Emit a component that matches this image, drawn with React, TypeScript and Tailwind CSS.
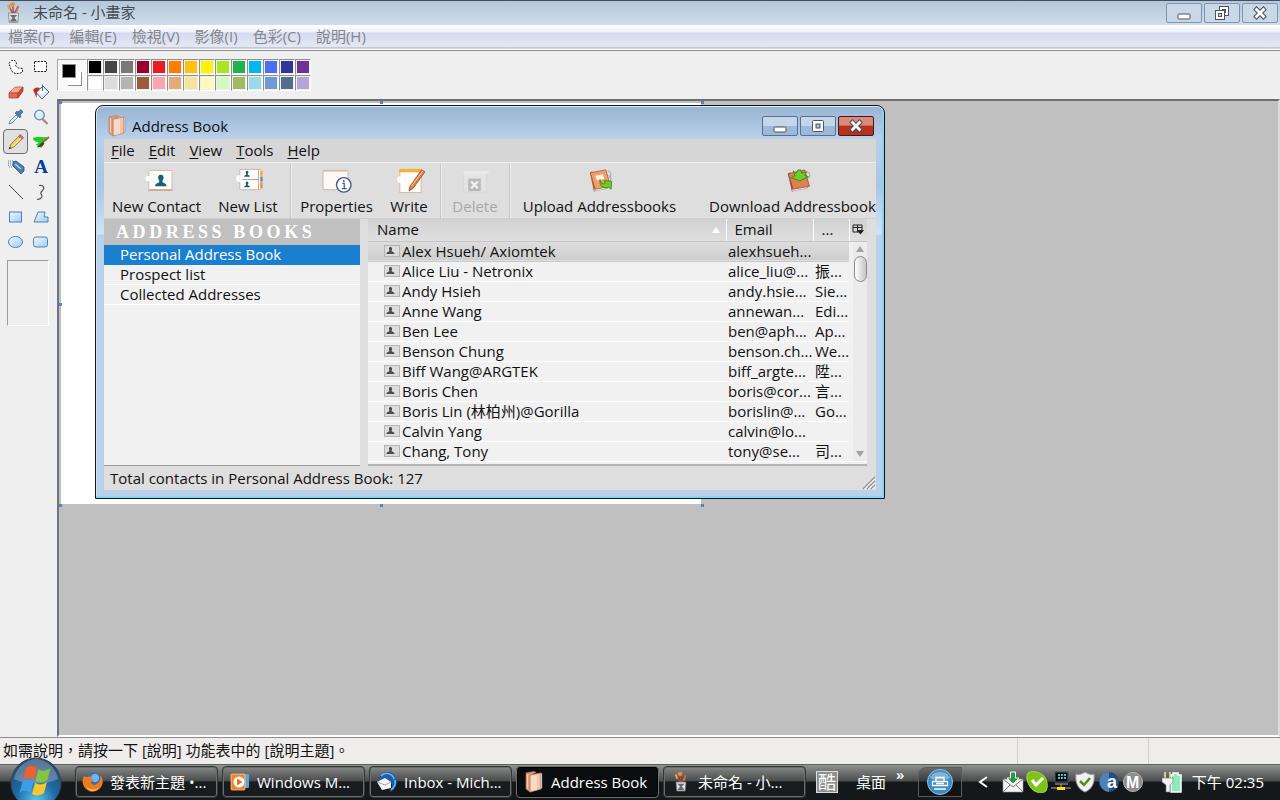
import type { ReactNode } from "react";

const paintMenus = ["檔案(F)", "編輯(E)", "檢視(V)", "影像(I)", "色彩(C)", "說明(H)"];

// two rows of 14 swatches
const palette = [
  "#000000", "#464646", "#787878", "#990030", "#ed1c24", "#ff7e00", "#ffc20e", "#fff200", "#a8e61d", "#22b14c", "#00b7ef", "#4d6df3", "#2f3699", "#6f3198",
  "#ffffff", "#dcdcdc", "#b4b4b4", "#9c5a3c", "#ffa3b1", "#e5aa7a", "#f5e49c", "#fff9bd", "#d3f9bc", "#9dbb61", "#99d9ea", "#709ad1", "#546d8e", "#b5a5d5",
];

const bookMenus = ["File", "Edit", "View", "Tools", "Help"];

const books = ["Personal Address Book", "Prospect list", "Collected Addresses"];

const contacts = [
  { name: "Alex Hsueh/ Axiomtek", email: "alexhsueh...", org: "" },
  { name: "Alice Liu - Netronix", email: "alice_liu@...", org: "振..." },
  { name: "Andy Hsieh", email: "andy.hsie...", org: "Sie..." },
  { name: "Anne Wang", email: "annewan...", org: "Edi..." },
  { name: "Ben Lee", email: "ben@aph...", org: "Ap..." },
  { name: "Benson Chung", email: "benson.ch...", org: "We..." },
  { name: "Biff Wang@ARGTEK", email: "biff_argte...", org: "陞..." },
  { name: "Boris Chen", email: "boris@cor...", org: "言..." },
  { name: "Boris Lin (林柏州)@Gorilla", email: "borislin@...", org: "Go..." },
  { name: "Calvin Yang", email: "calvin@lo...", org: "" },
  { name: "Chang, Tony", email: "tony@se...", org: "司..." },
];

/* ================= Icons ================= */

const BookIcon = ({ className }: { className: string }) => (
  <svg viewBox="0 0 18 22" className={className}>
    <path d="M1 2 9 .5l2 1L5 4v17L1 18z" fill="#dd9c7c" stroke="#b97a5c" strokeWidth=".7" />
    <path d="M2.500 3.500v14" stroke="#f6cdb6" />
    <path d="M5 4 16 2v16L5 21z" fill="#f4c4a5" stroke="#c08a6c" strokeWidth=".8" />
    <path d="M6 5 12 4v15l-6 1z" fill="#fbe0cf" opacity=".8" />
    <path d="M16 2v16l1-1V3z" fill="#fff" stroke="#7d7a80" strokeWidth=".5" />
  </svg>
);

const PaintIcon = ({ className }: { className: string }) => (
  <svg viewBox="0 0 16 22" className={className}>
    <path d="M7.500 13 3 3M8 13l5-9M8 12 7 1" stroke="#b5442e" strokeWidth="1.500" fill="none" />
    <path d="m1 3 2-1 2 5-2 1z" fill="#e0a060" />
    <path d="m12 3 2 1-2 6-2-1z" fill="#c96a52" />
    <circle cx="7" cy="2" r="2.500" fill="#f08a38" />
    <path d="M2.500 11h11l-1 10h-9z" fill="#dfe3e6" stroke="#737b83" strokeWidth=".8" />
    <path d="M4 13h8l-3 3 3 4H4l3-4z" fill="#656c74" />
  </svg>
);

const MinGlyph = () => (
  <svg viewBox="0 0 14 14" className="size-3.5">
    <rect x="1" y="8" width="12" height="5" rx="1" fill="#fff" stroke="#4a5463" />
  </svg>
);

const MaxGlyph = () => (
  <svg viewBox="0 0 14 14" className="size-3.5">
    <rect x="1.500" y="1.500" width="11" height="11" rx="1" fill="#fff" stroke="#4a5463" />
    <rect x="5" y="5" width="4" height="4" fill="#aac0da" stroke="#4a5463" />
  </svg>
);

const RestoreGlyph = () => (
  <svg viewBox="0 0 16 16" className="size-4">
    <rect x="5.500" y="1.500" width="9" height="9" fill="#fff" stroke="#4a5463" />
    <rect x="8.500" y="4.500" width="3" height="3" fill="#c5d3e2" stroke="#4a5463" />
    <rect x="1.500" y="5.500" width="9" height="9" fill="#fff" stroke="#4a5463" />
    <rect x="4.500" y="8.500" width="3" height="3" fill="#c5d3e2" stroke="#4a5463" />
  </svg>
);

const CloseGlyph = () => (
  <svg viewBox="0 0 14 14" className="size-3.5">
    <path d="m3.500 3.500 7 7M10.500 3.500l-7 7" stroke="#4a4d5a" strokeWidth="4.800" strokeLinecap="square" />
    <path d="m3.500 3.500 7 7M10.500 3.500l-7 7" stroke="#fff" strokeWidth="2.800" strokeLinecap="square" />
  </svg>
);

const tools: { label: string; icon: ReactNode }[] = [
  {
    label: "Free-form select",
    icon: <path d="M1 4.500 3.500 1.500h3.500l1.500 2.500-1 3 3 2 4 .5v3.500l-3 1.500H7L4 12.500 2.500 9z" fill="#fff" stroke="#111" strokeDasharray="2 1.200" />,
  },
  { label: "Select", icon: <rect x="1.500" y="2.500" width="12" height="10" fill="#fff" stroke="#111" strokeDasharray="2 1.200" /> },
  {
    label: "Eraser",
    icon: (
      <>
        <path d="m1 9 6-6h8l-5 6z" fill="#f5a896" stroke="#c65a48" strokeWidth=".8" />
        <path d="M1 9h9v5H1z" fill="#e06a56" stroke="#b84a38" strokeWidth=".8" />
        <path d="m10 9 5-6v4l-5 7z" fill="#c94a38" stroke="#a83c2c" strokeWidth=".8" />
      </>
    ),
  },
  {
    label: "Fill",
    icon: (
      <>
        <path d="M3 8.500 10 2l6 6-7 7z" fill="#d7e7f5" stroke="#476a90" />
        <path d="m5.500 8.500 4.500-4 3 3-4.500 3.500z" fill="#fff" />
        <path d="M9.500 7V.5" stroke="#476a90" />
        <path d="M0 6c2-3 5-3 7-2L4 8l-.5 6L1.500 9z" fill="#c52b24" />
      </>
    ),
  },
  {
    label: "Pick color",
    icon: (
      <>
        <path d="m1 15 1-3 6-6 2 2-6 6z" fill="#d9ecf9" stroke="#56789b" strokeWidth=".8" />
        <path d="m7 4 5 5 1-2-1-1 3-3-2-2.500-3 2.500-1-1z" fill="#4f7cab" stroke="#315a86" strokeWidth=".6" />
      </>
    ),
  },
  {
    label: "Magnifier",
    icon: (
      <>
        <path d="m9.500 10 5 5" stroke="#b88b60" strokeWidth="2.400" />
        <circle cx="6.500" cy="6" r="4.800" fill="#d9edfb" stroke="#6589ad" strokeWidth="1.300" />
        <path d="M4 5q1-2 3-2" stroke="#fff" fill="none" />
      </>
    ),
  },
  {
    label: "Pencil",
    icon: (
      <>
        <path d="m1 15 2-5 9-9 3 3-9 9z" fill="#f3cf63" stroke="#8f6c25" strokeWidth=".8" />
        <path d="m10.500 2.500 1.500-2 3.500 3-1.500 2z" fill="#d67579" stroke="#8c4648" strokeWidth=".6" />
        <path d="m5 12 8-8" stroke="#fff0a8" />
        <path d="m1 15 .8-2 1.400 1z" fill="#111" />
      </>
    ),
  },
  {
    label: "Brush",
    icon: (
      <>
        <path d="M0 4c4-2 9 0 14-1 1 2-1 4-4 5 2 1 0 4-2 6-1-2-5-2-5-4 2 0 3-1 2-2-2 0-5-1-5-4z" fill="#1bd11f" />
        <path d="m16 3-7 6" stroke="#a8642e" strokeWidth="1.800" />
        <path d="m9.500 8-6 5.500 5.500-1 2.500-3z" fill="#5a3720" />
      </>
    ),
  },
  {
    label: "Airbrush",
    icon: (
      <>
        <path d="M0 2h5M0 4h4M0 6h5M1 8h3" stroke="#4d7ca8" strokeDasharray="1 1" />
        <path d="m5 3 3-1 8 6v4l-3 3-8-8z" fill="#4c7dac" stroke="#28507a" strokeWidth=".8" />
        <path d="m7 5 6 5" stroke="#b7d7ef" strokeWidth="1.500" />
      </>
    ),
  },
  {
    label: "Text",
    icon: (
      <text x="8" y="14" textAnchor="middle" fontSize="19" fontWeight="bold" fontFamily="Liberation Serif, serif" fill="#0b37a0">A</text>
    ),
  },
  { label: "Line", icon: <path d="m1 1 14 14" stroke="#444" /> },
  { label: "Curve", icon: <path d="M6 1.500c5-1 6 3 3 5.500s0 3 0 5-3 4-5 3" fill="none" stroke="#555" strokeWidth="1.200" /> },
  { label: "Rectangle", icon: <rect x="1.500" y="3" width="12" height="10" fill="url(#shape)" stroke="#4f81b0" /> },
  { label: "Polygon", icon: <path d="m1 13 4-10h7l-1 5h4v5z" fill="url(#shape)" stroke="#4f81b0" /> },
  { label: "Ellipse", icon: <ellipse cx="7.500" cy="8" rx="7" ry="5.500" fill="url(#shape)" stroke="#4f81b0" /> },
  { label: "Rounded rectangle", icon: <rect x=".5" y="3" width="14" height="10" rx="2.500" fill="url(#shape)" stroke="#4f81b0" /> },
];

const Person = ({ x, y, s = 1 }: { x: number; y: number; s?: number }) => (
  <path
    transform={`translate(${x} ${y}) scale(${s})`}
    d="M6 0c2.500 0 3.200 2 2.700 4C8.300 5.500 7.600 6 7.600 7.500c1 1.500 4.400 1 4.400 4.500H0c0-3.500 3.400-3 4.400-4.500 0-1.500-.7-2-1.100-3.500C2.800 2 3.500 0 6 0z"
    fill="#12647c"
  />
);

const bookButtons: { label: string; width: string; disabled?: boolean; divided?: boolean; icon: ReactNode }[] = [
  {
    label: "New Contact",
    width: "w-[105px]",
    icon: (
      <>
        <rect x="8.500" y="3.500" width="24" height="20" rx="1" fill="#fffdfb" stroke="#d5b9a8" />
        <path d="M8 24h25" stroke="#c08a6c" />
        <Person x={15} y={8} />
        <circle cx="8" cy="12" r="3" fill="#fff" opacity=".9" />
      </>
    ),
  },
  {
    label: "New List",
    width: "w-[78px]",
    icon: (
      <>
        <rect x="8.500" y="2.500" width="22" height="21" rx="1" fill="#fffdfb" stroke="#d0b3a0" />
        <path d="M28 3v20M8 13h20" stroke="#c9987e" />
        <path d="M31 4v5" stroke="#e8b33c" strokeWidth="2.500" />
        <path d="M31 10v5" stroke="#5b92b5" strokeWidth="2.500" />
        <path d="M31 16v6" stroke="#dd9354" strokeWidth="2.500" />
        <Person x={13} y={4} s={0.5} />
        <Person x={13} y={15} s={0.5} />
        <circle cx="8" cy="12" r="3.500" fill="#fff" opacity=".9" />
      </>
    ),
  },
  {
    label: "Properties",
    width: "ml-[3px] w-[92px]",
    divided: true,
    icon: (
      <>
        <rect x="2.500" y="3.500" width="26" height="20" rx="1" fill="#fbf8f5" stroke="#cdb4a4" />
        <path d="M3 4.500h25" stroke="#f0c49a" />
        <circle cx="24" cy="18.500" r="7.500" fill="#fff" stroke="#40598c" strokeWidth="1.400" />
        <path d="M22.500 17H24.500v5.500M22 22.500h5" stroke="#40598c" strokeWidth="1.300" fill="none" />
        <circle cx="24" cy="14.500" r="1" fill="#40598c" />
      </>
    ),
  },
  {
    label: "Write",
    width: "w-[58px] pr-1",
    icon: (
      <>
        <rect x="7.500" y="2.500" width="22" height="24" fill="#fffdfa" stroke="#d8b99f" />
        <path d="M7 2h23v3.500H7z" fill="#f5b33d" />
        <path d="m17 25 1-5L30 3l3.500 2-12 17z" fill="#db8247" stroke="#8c492b" strokeWidth=".8" />
        <path d="m19.500 20 12-16" stroke="#ffcf9e" />
        <circle cx="8" cy="13" r="3.500" fill="#fff" opacity=".9" />
      </>
    ),
  },
  {
    label: "Delete",
    width: "w-[69px]",
    disabled: true,
    divided: true,
    icon: (
      <>
        <rect x="5" y="4" width="24" height="22" fill="#e3e3e3" stroke="#d8d8d8" />
        <path d="M5 4h26v3H5z" fill="#ebebeb" />
        <rect x="10" y="12" width="13" height="13" fill="#b9b9b9" />
        <path d="m13 15 7 7M20 15l-7 7" stroke="#f2f2f2" strokeWidth="2.400" />
      </>
    ),
  },
  {
    label: "Upload Addressbooks",
    width: "w-[180px]",
    divided: true,
    icon: (
      <>
        <path d="M25 4c4 0 4 5 2 7M26 9c3 1 3 4 1 6" stroke="#9a9a9a" fill="none" />
        <path d="m7 6 2-1 5 18-3 2z" fill="#b95b38" stroke="#8d4328" strokeWidth=".6" />
        <path d="m11 25 14-3v-2l-14 3z" fill="#fff" stroke="#9a8577" strokeWidth=".6" />
        <path d="m7 6 16-3 5 17-16 3z" fill="#efa068" stroke="#ad5534" strokeWidth=".8" />
        <path d="m12 9 8-1.500 1.500 5-7.500 1.500z" fill="#fff3e8" />
        <path d="M17 13c1 4 3 5 5.500 4l-1-3L29 15l-.5 8-2.500-2c-5 2-10-1-9-8z" fill="#6ccc28" stroke="#317d10" strokeWidth=".8" />
      </>
    ),
  },
  {
    label: "Download Addressbooks",
    width: "w-[214px]",
    icon: (
      <>
        <path d="M28 5c4 0 4 5 2 7" stroke="#9a9a9a" fill="none" />
        <path d="m9 7 2-1 5 17-3 2z" fill="#a9472d" stroke="#7d3420" strokeWidth=".6" />
        <path d="m13 25 16-3v-2l-16 3z" fill="#fff" stroke="#9a8577" strokeWidth=".6" />
        <path d="m9 7 17-4 5 17-17 3z" fill="#df8052" stroke="#9d4a2e" strokeWidth=".8" />
        <path d="m14 4 3 2.500L19 3h3l1 3.500L28 5l-2 4 4 1-9 4.500L12 11l4-2z" fill="#6ccc28" stroke="#317d10" strokeWidth=".8" />
      </>
    ),
  },
];

const FirefoxIcon = () => (
  <svg viewBox="0 0 22 22" className="size-[22px] shrink-0">
    <circle cx="11" cy="10.500" r="9" fill="#2f6fc4" />
    <circle cx="13" cy="7" r="4" fill="#72b5ea" />
    <path d="M2 5c1 1 2 1 4 1 2-1 4 0 4 2l2 1-3 2c0 3 4 4 7 1 2-2 3-5 2-8 3 3 4 8 1 12-4 6-12 6-16 1C0 13 0 9 2 5z" fill="#ee7a1b" />
    <path d="M4 15c3 4 9 5 13 1-2 5-10 6-13-1z" fill="#fdc23e" />
  </svg>
);

const PlayerIcon = () => (
  <svg viewBox="0 0 22 22" className="size-[22px] shrink-0">
    <rect x="6" y="3" width="14" height="14" rx="1" fill="#5aa6d8" />
    <rect x="2" y="3" width="14" height="16" rx="1" fill="#f0832c" stroke="#fbd6a8" strokeWidth=".7" />
    <circle cx="10" cy="11" r="5.500" fill="#fff" />
    <path d="m8 7.500 5.500 3.500L8 14.500z" fill="#e7701b" />
  </svg>
);

const MailIcon = () => (
  <svg viewBox="0 0 22 22" className="size-[22px] shrink-0">
    <path d="M3 7C6 0 15-1 19 5c4 6 1 14-6 16 3-3 4-7 2-9L4 11z" fill="#1d5da8" />
    <path d="M5 5c5-5 12-2 13 3M19 9c1 4-1 8-4 10" stroke="#5fb0ea" strokeWidth="1.800" fill="none" />
    <path d="m1 11 8-4 6 4v6l-9 2z" fill="#f8f8fa" />
    <path d="m1 11 8 3 6-3" stroke="#9ba6b8" fill="none" />
  </svg>
);

const tasks: { label: string; icon: ReactNode; active?: boolean }[] = [
  { label: "發表新主題 •...", icon: <FirefoxIcon /> },
  { label: "Windows M...", icon: <PlayerIcon /> },
  { label: "Inbox - Mich...", icon: <MailIcon /> },
  { label: "Address Book", icon: <BookIcon className="h-[22px] w-[22px] shrink-0" />, active: true },
  { label: "未命名 - 小...", icon: <PaintIcon className="h-[20px] w-[22px] shrink-0" /> },
];

const trayIcons: { label: string; icon: ReactNode }[] = [
  {
    label: "New mail",
    icon: (
      <>
        <path d="M1 8h20v13H1z" fill="#f3f3f3" stroke="#999" strokeWidth=".6" />
        <path d="m1 8 10 8 10-8M1 21l7-7M21 21l-7-7" fill="none" stroke="#777" />
        <path d="M8.500 1h5v6H17l-6 6-6-6h3.500z" fill="#279b3c" stroke="#fff" />
      </>
    ),
  },
  {
    label: "Skype",
    icon: (
      <>
        <path d="M2 2c4-3 12-1 16 3 4 5 4 11 2 15-4 3-9 2-13-1C2 15-1 6 2 2z" fill="#7cc416" stroke="#b8e35c" strokeWidth=".8" />
        <path d="m6 9 4 5 7-7" stroke="#fff" strokeWidth="3" fill="none" />
      </>
    ),
  },
  {
    label: "Network",
    icon: (
      <>
        <rect x="5" y="1" width="13" height="10" fill="#050505" stroke="#4e5a60" />
        <path d="M8 4h8M8 7h8" stroke="#35c9d8" strokeWidth="2" strokeDasharray="2 1" />
        <path d="M5 13h13M11 13v3M1 17h20" stroke="#aaa" />
        <rect x="7" y="16" width="8" height="3" fill="#ffe600" />
      </>
    ),
  },
  {
    label: "Security",
    icon: (
      <>
        <path d="M2 3c3 1 6 0 9-2 3 2 6 3 9 2 1 9-2 15-9 18C4 18 1 12 2 3z" fill="#f1f1f1" stroke="#999" />
        <path d="m6 10 4 4 6-7" stroke="#5c8a14" strokeWidth="2.500" fill="none" />
      </>
    ),
  },
  {
    label: "Avira",
    icon: (
      <>
        <circle cx="11" cy="11" r="10" fill="#214f8c" />
        <path d="M2 7a10 10 0 0 1 9-6v20C5 20 0 14 2 7z" fill="#6da3d4" opacity=".6" />
        <text x="9" y="17" fontSize="18" fontWeight="bold" fontFamily="Liberation Sans, sans-serif" fill="#fff">a</text>
      </>
    ),
  },
  {
    label: "Messenger",
    icon: (
      <>
        <circle cx="11" cy="11" r="9.500" fill="#8d8d8d" stroke="#b5b5b5" />
        <text x="4" y="16.500" fontSize="16" fontWeight="bold" fontFamily="Liberation Sans, sans-serif" fill="#fff">M</text>
      </>
    ),
  },
];

/* ================= Address book window ================= */

const AddressBook = () => (
  <section
    aria-label="Address Book"
    className="absolute top-1 left-9 w-[790px] rounded-t-lg border border-[#10151c] bg-[linear-gradient(#99b4d2_0px,#b9d0ea_33px,#a9c6e6_80px,#d3e3f4_128px,#b9d1ea_129px)] px-2 pb-2 shadow-[inset_0_1px_0_#dcecf8,inset_-2px_-2px_0_#86d6f0,inset_1px_0_0_#cfe2f3]"
  >
    <header className="flex h-[33px] items-center pt-1.5">
      <BookIcon className="mx-1 h-[22px] w-[18px]" />
      <h2 className="flex-1 pl-0.5">Address Book</h2>
      <div className="flex gap-0.5 pr-0.5">
        <button aria-label="Minimize" className="flex h-5 w-9 items-center justify-center rounded-xs border border-[#54719a] bg-linear-to-b from-[#c4d6e9] from-50% to-[#9db9d7] to-50%"><MinGlyph /></button>
        <button aria-label="Maximize" className="flex h-5 w-9 items-center justify-center rounded-xs border border-[#54719a] bg-linear-to-b from-[#c4d6e9] from-50% to-[#9db9d7] to-50%"><MaxGlyph /></button>
        <button aria-label="Close" className="flex h-5 w-9 items-center justify-center rounded-xs border border-[#4c1517] bg-linear-to-b from-[#d98a7c] from-45% to-[#b8311d] to-50%"><CloseGlyph /></button>
      </div>
    </header>

    <div className="bg-[#dedede]">
      <nav className="flex h-6 items-center gap-3.5 border-b border-[#efefef] bg-[#d6d6d6] pb-0.5 pl-[7px]">
        {bookMenus.map((menu) => (
          <button key={menu}>
            <span className="underline underline-offset-2">{menu[0]}</span>
            {menu.slice(1)}
          </button>
        ))}
      </nav>

      <div className="flex h-14 overflow-hidden border-b border-[#cfcfcf]">
        {bookButtons.map(({ label, width, disabled, divided, icon }) => (
          <button
            key={label}
            disabled={disabled}
            className={`flex shrink-0 flex-col items-center pt-1 whitespace-nowrap disabled:text-[#a8a8a8] ${width} ${divided ? "border-l border-[#c8c8c8] shadow-[inset_1px_0_0_#ededed]" : ""}`}
          >
            <svg viewBox="0 0 34 28" className="h-7 w-[34px]">{icon}</svg>
            <span className="leading-6">{label}</span>
          </button>
        ))}
      </div>

      <div className="flex">
        <aside className="w-64 border-b border-[#9c9c9c] bg-[#f1f1f1]">
          <h3 className="h-[26px] bg-[#c0c0c0] pl-3 font-[Liberation_Serif,serif] text-lg leading-[26px] font-bold tracking-[0.2em] text-white">ADDRESS BOOKS</h3>
          <ul>
            {books.map((book, i) => (
              <li key={book}>
                <button className={`block h-5 w-full border-b pl-4 text-left leading-[19px] ${i === 0 ? "border-[#1b7fcf] bg-[#1b7fcf] text-white" : "border-white"}`}>{book}</button>
              </li>
            ))}
          </ul>
        </aside>

        <div className="mr-[9px] ml-2 flex-1 border-b-2 border-[#b5b5b5] bg-[#f1f1f1] pb-0.5">
          <table className="w-full table-fixed border-collapse">
            <colgroup>
              <col />
              <col className="w-[87px]" />
              <col className="w-9" />
              <col className="w-[18px]" />
            </colgroup>
            <thead className="bg-linear-to-b from-[#d2d2d2] to-[#dfdfdf]">
              <tr className="h-[22px]">
                <th className="border-b border-[#c6c6c6] p-0 font-normal">
                  <button className="flex w-full items-center justify-between pr-1.5 pl-[9px] leading-[21px]">
                    Name
                    <svg viewBox="0 0 8 6" className="h-1.5 w-2"><path d="m4 0 4 6H0z" fill="#fff" /></svg>
                  </button>
                </th>
                <th className="border-b border-l border-[#c6c6c6] border-l-white p-0 pl-2 text-left leading-[21px] font-normal">Email</th>
                <th className="border-b border-l border-[#c6c6c6] border-l-white p-0 pl-2 text-left leading-[21px] font-normal">...</th>
                <th className="border-b border-l border-[#c6c6c6] border-l-white p-0">
                  <button aria-label="Select columns" className="flex w-full justify-center">
                    <svg viewBox="0 0 12 11" className="h-[11px] w-3">
                      <path d="M1 1h9v7H1zM1 3.500h9M5.500 1v7" fill="none" stroke="#222" />
                      <path d="M5 6h7l-3.500 4.500z" fill="#222" />
                    </svg>
                  </button>
                </th>
              </tr>
            </thead>
            <tbody>
              {contacts.map(({ name, email, org }, i) => (
                <tr key={name} className={`h-5 border-b ${i === 0 ? "border-[#c9c9c9] bg-linear-to-b from-[#dedede] to-[#cecece]" : "border-white"}`}>
                  <td className="p-0 leading-[19px]">
                    <div className="flex items-center gap-0.5 pl-4">
                      <svg viewBox="0 0 16 12" className="h-3 w-4">
                        <rect x=".5" y=".5" width="15" height="11" fill="#dcdcdc" stroke="#b4b4b4" />
                        <path d="M6.500 2c1.500 0 1.800 1.200 1.500 2.500L7.500 6c.5.8 3 .6 3 3h-8c0-2.400 2.500-2.200 3-3L5 4.500C4.700 3.200 5 2 6.500 2z" fill="#4d4d4d" />
                      </svg>
                      {name}
                    </div>
                  </td>
                  <td className="p-0 pl-0.5 leading-[19px] whitespace-nowrap">{email}</td>
                  <td className="p-0 pl-0.5 leading-[19px] whitespace-nowrap">{org}</td>
                  {i === 0 && (
                    <td rowSpan={contacts.length} className="bg-[#f1f1f1] p-0 pl-1">
                      <div className="flex h-[219px] flex-col items-center bg-[#ebebeb] py-1">
                        <svg viewBox="0 0 8 6" className="h-1.5 w-2"><path d="m4 0 4 6H0z" fill="#a2a2a2" /></svg>
                        <div className="mt-1 h-[26px] w-[13px] rounded-full border border-[#8a8a8a] bg-linear-to-r from-white to-[#c4c4c4]" />
                        <svg viewBox="0 0 8 6" className="mt-auto h-1.5 w-2"><path d="m4 6 4-6H0z" fill="#a2a2a2" /></svg>
                      </div>
                    </td>
                  )}
                </tr>
              ))}
            </tbody>
          </table>
        </div>
      </div>

      <footer className="flex h-6 items-end justify-between pl-1.5">
        <span className="self-center">Total contacts in Personal Address Book: 127</span>
        <svg viewBox="0 0 14 14" className="size-3.5">
          <path d="M1 13 13 1M5 13l8-8M9 13l4-4" stroke="#8c8c8c" strokeWidth="1.200" />
          <path d="M2.500 13 13 2.500M6.500 13 13 6.500M10.500 13l2.500-2.500" stroke="#fff" />
        </svg>
      </footer>
    </div>
  </section>
);

/* ================= Paint ================= */

const Toolbox = () => (
  <aside className="w-[57px] pt-[3px]">
    <div className="grid grid-cols-2 pr-1 pl-[3px]">
      {tools.map(({ label, icon }) => (
        <button
          key={label}
          aria-label={label}
          className={`flex h-[25px] items-center justify-center rounded-sm border ${label === "Pencil" ? "border-[#6e6e6e] bg-[#e0e0e0]" : "border-transparent"}`}
        >
          <svg viewBox="0 0 16 16" className="size-4 overflow-visible">{icon}</svg>
        </button>
      ))}
    </div>
    <div className="mt-1.5 ml-[7px] h-[66px] w-[42px] border border-white border-t-[#9c9c9c] border-l-[#9c9c9c]" />
  </aside>
);

const Palette = () => (
  <div className="flex h-12 pt-2">
    <div className="relative h-8 w-[30px] border border-[#a5a5a5] border-r-white border-b-white bg-[#f8f8f8]">
      <span className="absolute top-3 left-2.5 size-3.5 border-r border-b border-[#8f8f8f] bg-white" />
      <span className="absolute top-1 left-1 size-3.5 border border-[#8f8f8f] bg-black ring-1 ring-white" />
    </div>
    <div className="grid h-8 w-56 grid-cols-14">
      {palette.map((color) => (
        <button key={color} aria-label={color} className="size-4 border border-white border-t-[#8e8e8e] border-l-[#8e8e8e] p-px">
          <span className="block size-full" style={{ backgroundColor: color }} />
        </button>
      ))}
    </div>
  </div>
);

const handle = "absolute size-[3px] bg-[#4d86c6]";

const Workspace = () => (
  <div className="relative flex-1 overflow-hidden border-2 border-white border-t-[#6f6c6c] border-l-[#6b7480] border-r-[#dcdcdc] bg-[#c0c0c0] p-0.5">
    <div className="h-[401px] w-[640px] bg-white" />
    <i className={`${handle} top-0 left-0`} />
    <i className={`${handle} top-0 left-[321px]`} />
    <i className={`${handle} top-0 left-[642px]`} />
    <i className={`${handle} top-[202px] left-0`} />
    <i className={`${handle} top-[403px] left-0`} />
    <i className={`${handle} top-[403px] left-[321px]`} />
    <i className={`${handle} top-[403px] left-[642px]`} />
    <AddressBook />
  </div>
);

/* ================= Taskbar ================= */

const StartOrb = () => (
  <button aria-label="Start" className="absolute -top-2 left-2.5">
    <svg viewBox="0 0 52 52" className="size-[52px]">
      <circle cx="26" cy="26" r="25" fill="url(#orb)" stroke="#33475a" />
      <path d="M4 22C7 7 20 2 26 2s19 5 22 20c-12 6-32 6-44 0z" fill="#fff" opacity=".25" />
      <path d="M16 11c4-3 8-3 11 0l-3 12c-4-3-7-3-11 0z" fill="#f0602a" />
      <path d="M28.500 12c4 3 8 2 12-1l-3 12c-4 3-9 3-12 1z" fill="#86c440" />
      <path d="M12.500 25c4-3 7-3 11 0l-3 11c-4-3-7-3-11 0z" fill="#3d9ee6" />
      <path d="M25 26c4 2 8 2 12-1l-3 11c-4 3-9 3-12 1z" fill="#fbc62c" />
    </svg>
  </button>
);

const Taskbar = () => (
  <footer className="relative flex h-9 items-center border-t border-[#5d615e] bg-linear-to-b from-[#919391] via-[#4a4d4c] via-45% to-[#15181a] to-50% pb-0.5 text-white">
    <StartOrb />
    <div className="flex gap-1 pl-[75px]">
      {tasks.map(({ label, icon, active }) => (
        <button
          key={label}
          className={`flex h-8 w-[143px] items-center gap-1.5 rounded-sm border px-1.5 whitespace-nowrap ${
            active
              ? "border-[#6f7271] bg-[#0b0c0d] shadow-[inset_0_0_0_1px_#000]"
              : "border-[#343837] bg-linear-to-b from-[#858886] via-[#4b4e4d] via-45% to-[#191c1e] to-50% shadow-[inset_0_0_0_1px_#6a6d6b]"
          }`}
        >
          {icon}
          {label}
        </button>
      ))}
    </div>
    <button className="ml-2.5 flex size-[22px] items-center justify-center border border-[#ddd] bg-[#8f8f8f] text-lg leading-5">酷</button>
    <button className="ml-[18px] whitespace-nowrap">桌面</button>
    <button aria-label="More" className="mb-4 ml-2.5 leading-4 font-semibold">»</button>
    <button aria-label="Language bar" className="ml-3.5 flex h-[30px] w-11 items-center justify-center rounded-tl-lg border border-[#5b5e5d] bg-black/20">
      <svg viewBox="0 0 26 26" className="size-[26px]">
        <circle cx="13" cy="13" r="12.500" fill="#3d8bc4" stroke="#8fc4e6" />
        <path d="M3 9c3-8 17-8 20 0-6 3-14 3-20 0z" fill="#fff" opacity=".35" />
        <path d="M9 12V8.500h8V12M5.500 12.500h15v4h-15zM9 14.500h8M7 20h12" fill="none" stroke="#fff" strokeWidth="1.300" />
      </svg>
    </button>
    <div className="ml-auto flex items-center gap-0.5 pr-4">
      <button aria-label="Show hidden icons" className="mr-3">
        <svg viewBox="0 0 10 12" className="h-3 w-2.5"><path d="M9 1 2 6l7 5" fill="none" stroke="#fff" strokeWidth="2" /></svg>
      </button>
      {trayIcons.map(({ label, icon }) => (
        <button key={label} aria-label={label}>
          <svg viewBox="0 0 22 22" className="size-[22px]">{icon}</svg>
        </button>
      ))}
      <button aria-label="Battery" className="ml-4">
        <svg viewBox="0 0 20 22" className="h-[22px] w-5">
          <path d="M9 4h2V2h5v2h3v17H9z" fill="#8eeabc" stroke="#fff" strokeWidth="1.500" />
          <path d="M3 1v6M8 1v6" stroke="#e5d391" strokeWidth="1.800" />
          <path d="M0 7h11v4l-3 3v7H4v-7l-4-3z" fill="#f2f2f2" stroke="#777" strokeWidth=".6" />
        </svg>
      </button>
      <time className="ml-2 whitespace-nowrap">下午 02:35</time>
    </div>
  </footer>
);

export default function App() {
  return (
    <div lang="zh-Hant" className="flex h-screen flex-col overflow-hidden bg-[#efefef] font-[Open_Sans,Noto_Sans_CJK_TC,sans-serif] text-[15px] leading-5 text-[#111]">
      <svg className="absolute size-0" aria-hidden="true">
        <defs>
          <linearGradient id="shape" x1="0" y1="0" x2="1" y2="1">
            <stop stopColor="#eff8ff" />
            <stop offset="1" stopColor="#9fcdf5" />
          </linearGradient>
          <radialGradient id="orb" cx=".5" cy=".85" r=".8">
            <stop stopColor="#55c9ee" />
            <stop offset=".5" stopColor="#1f6aa5" />
            <stop offset="1" stopColor="#28486a" />
          </radialGradient>
        </defs>
      </svg>

      <header className="flex h-[25px] shrink-0 items-center border-t border-[#454d59] bg-linear-to-b from-[#b4c7dc] to-[#d0deea] text-[#444b54]">
        <PaintIcon className="mr-3 ml-1.5 h-[22px] w-[15px]" />
        <h1 className="flex-1 pb-0.5">未命名 - 小畫家</h1>
        <div className="flex gap-0.5 pr-0.5">
          <button aria-label="Minimize" className="flex h-5 w-9 items-center justify-center rounded-xs border border-[#8093b4] bg-[#c9d7e6]"><MinGlyph /></button>
          <button aria-label="Restore" className="flex h-5 w-9 items-center justify-center rounded-xs border border-[#8093b4] bg-[#c9d7e6]"><RestoreGlyph /></button>
          <button aria-label="Close" className="flex h-5 w-9 items-center justify-center rounded-xs border border-[#8093b4] bg-[#c9d7e6]"><CloseGlyph /></button>
        </div>
      </header>

      <nav className="flex h-[26px] shrink-0 items-center gap-[15px] border-b border-[#8d8d92] bg-[linear-gradient(#ffffff_0px,#eef0fa_7px,#d5daef_8px,#e4e8f5_22px,#a9a9b8_23px,#ffffff_24px)] pb-[3px] pl-2 text-[#85868c]">
        {paintMenus.map((menu) => (
          <button key={menu}>{menu}</button>
        ))}
      </nav>

      <main className="flex min-h-0 flex-1">
        <Toolbox />
        <div className="flex min-w-0 flex-1 flex-col">
          <Palette />
          <Workspace />
        </div>
      </main>

      <div className="flex h-[27px] shrink-0 items-center border-t border-[#8d8d8d] bg-[#efedec] pl-[3px]">
        <span className="flex-1 pb-0.5">如需說明，請按一下 [說明] 功能表中的 [說明主題]。</span>
        <span className="h-full w-[131px] border-l border-[#d2d0cf]" />
        <span className="h-full w-[132px] border-l border-[#d2d0cf]" />
      </div>

      <Taskbar />
    </div>
  );
}
